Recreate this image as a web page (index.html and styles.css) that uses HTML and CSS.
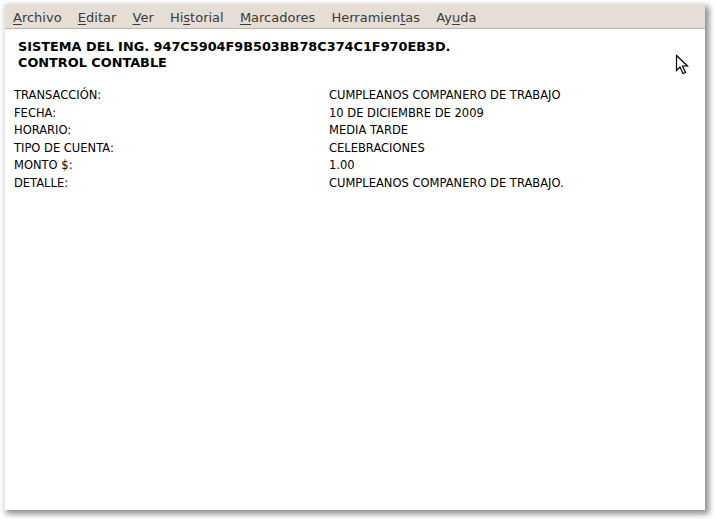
FILE: index.html
```html
<!DOCTYPE html>
<html>
<head>
<meta charset="utf-8">
<link rel="stylesheet" href="styles.css">
</head>
<body>
<div class="window">
  <div class="menubar">
    <span class="mi"><u>A</u>rchivo</span>
    <span class="mi"><u>E</u>ditar</span>
    <span class="mi"><u>V</u>er</span>
    <span class="mi">Hi<u>s</u>torial</span>
    <span class="mi"><u>M</u>arcadores</span>
    <span class="mi">Herramien<u>t</u>as</span>
    <span class="mi">Ay<u>u</u>da</span>
  </div>
  <div class="content">
    <h1 class="title">SISTEMA DEL ING. 947C5904F9B503BB78C374C1F970EB3D.<br>CONTROL CONTABLE</h1>
    <div class="grid">
      <div>TRANSACCIÓN:</div><div>CUMPLEANOS COMPANERO DE TRABAJO</div>
      <div>FECHA:</div><div>10 DE DICIEMBRE DE 2009</div>
      <div>HORARIO:</div><div>MEDIA TARDE</div>
      <div>TIPO DE CUENTA:</div><div>CELEBRACIONES</div>
      <div>MONTO $:</div><div>1.00</div>
      <div>DETALLE:</div><div>CUMPLEANOS COMPANERO DE TRABAJO.</div>
    </div>
    <svg class="cursor" width="14" height="22" viewBox="0 0 14 22">
      <path d="M1.5 1.5 L1.5 16.5 L5 13 L8 19.5 L10.5 18.5 L7.5 12 L12.5 12 Z" fill="#fff" stroke="#000" stroke-width="1.2" stroke-linejoin="miter"/>
    </svg>
  </div>
</div>
</body>
</html>
```
FILE: styles.css
```css
html, body {
  margin: 0;
  padding: 0;
  background: #ffffff;
}
body {
  min-height: 519px;
  overflow: hidden;
}
.window {
  position: relative;
  margin: 4px 0 0 4px;
  width: 701px;
  height: 506px;
  background: #ffffff;
  display: flex;
  flex-direction: column;
  box-shadow: 3px 3px 6px 1px rgba(0,0,0,0.45);
  border-left: 1px solid #e8e8e8;
  box-sizing: border-box;
}
.menubar {
  height: 25px;
  flex: none;
  background: #e6ddd4;
  border-bottom: 1px solid #bfb4a8;
  box-sizing: border-box;
  display: flex;
  align-items: center;
  gap: 16.2px;
  padding: 2px 0 0 8px;
  font-family: "DejaVu Sans", sans-serif;
  font-size: 13px;
  color: #3a3a3a;
}
.mi u {
  text-decoration-thickness: 1px;
  text-underline-offset: 2px;
}
.content {
  position: relative;
  flex: 1;
  padding: 10px 0 0 9px;
  font-family: "DejaVu Sans", Verdana, sans-serif;
  color: #000;
}
.title {
  margin: 0 0 16px 4px;
  font-size: 12.85px;
  font-weight: bold;
  line-height: 16px;
}
.grid {
  display: grid;
  grid-template-columns: 315px 1fr;
  font-size: 11.5px;
  line-height: 17.6px;
}
.cursor {
  position: absolute;
  left: 670px;
  top: 25px;
}
```
